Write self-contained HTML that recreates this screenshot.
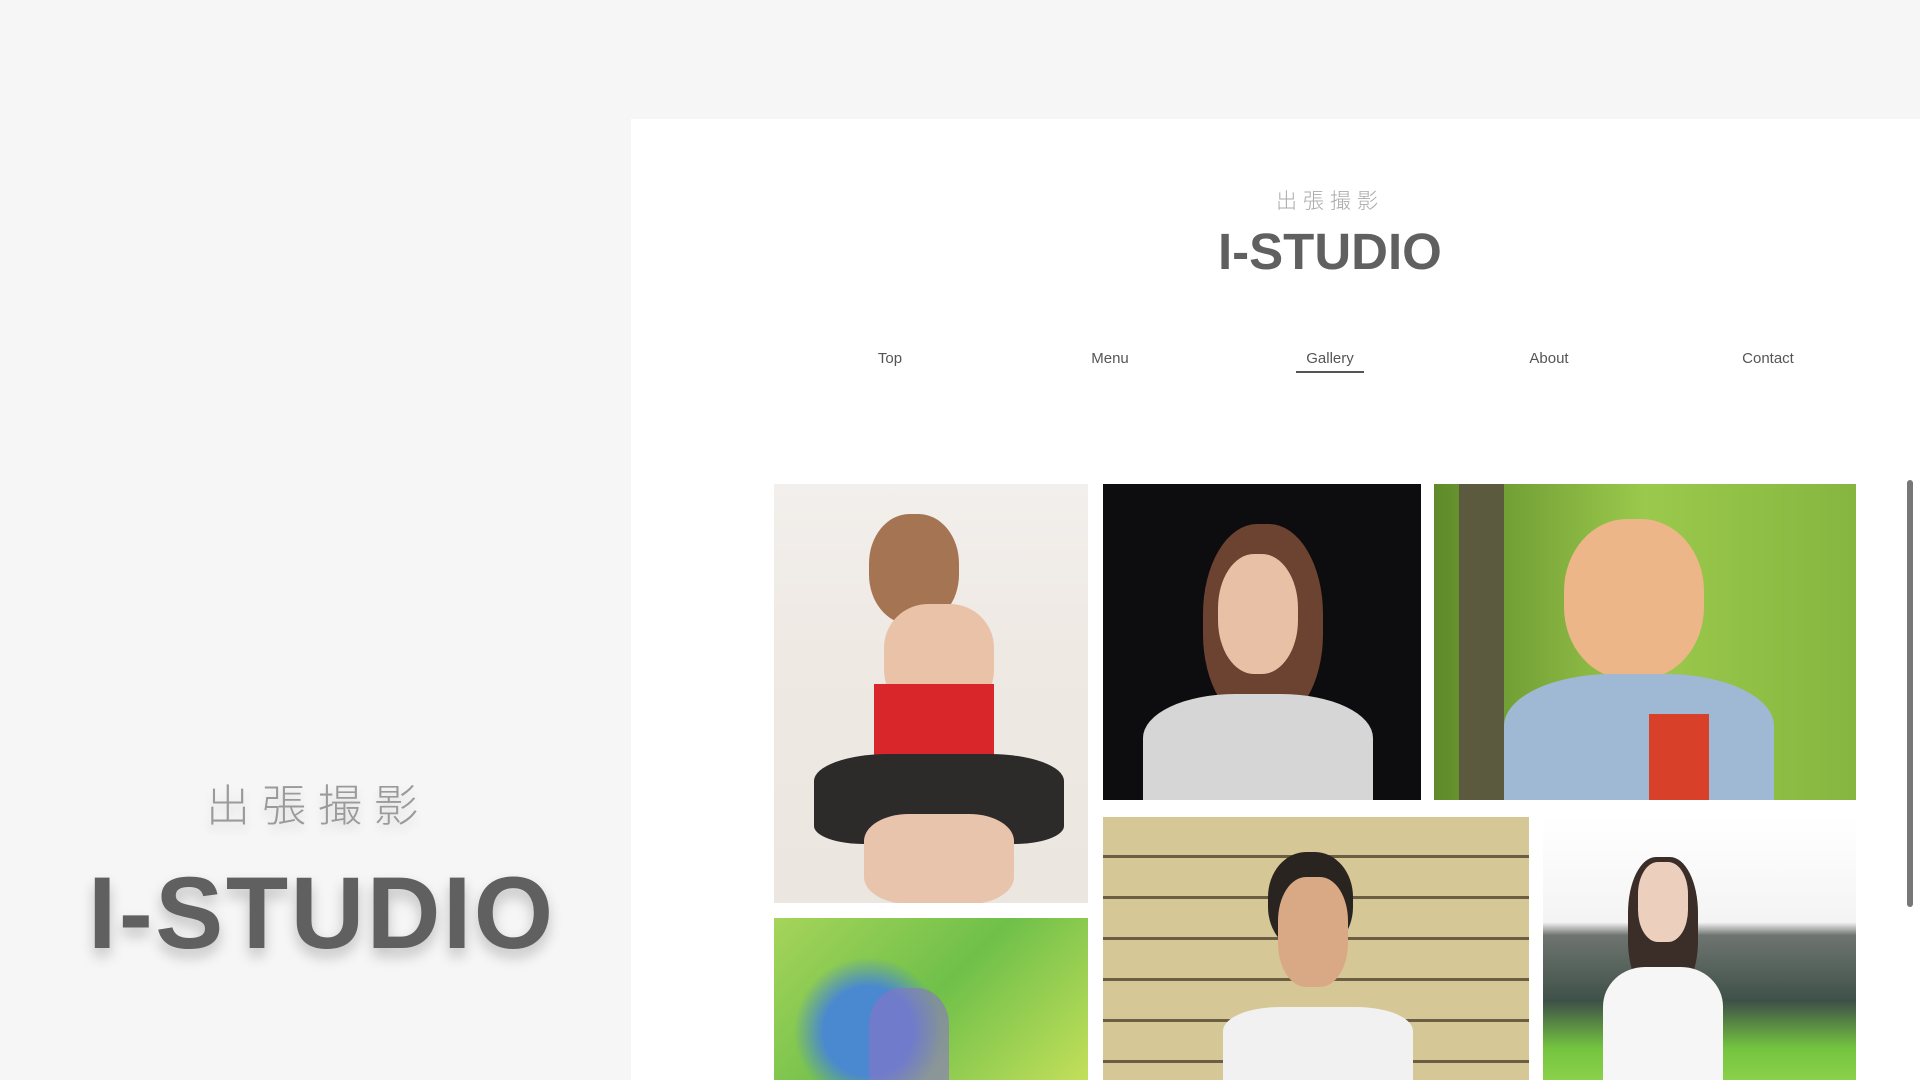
<!DOCTYPE html>
<html><head><meta charset="utf-8"><style>
*{margin:0;padding:0;box-sizing:border-box}
body{width:1920px;height:1080px;overflow:hidden;background:#f6f6f6;font-family:"Liberation Sans","Noto Sans CJK JP",sans-serif;position:relative}
.panel{position:absolute;left:631px;top:119px;width:1289px;height:961px;background:#fff}
.abs{position:absolute}
.jp{color:#9a9a9a;font-weight:300;white-space:nowrap}
.logo{color:#606060;font-weight:bold;white-space:nowrap;line-height:1}
.nav{position:absolute;top:350px;font-size:15px;color:#555;transform:translateX(-50%)}
.ph{position:absolute;overflow:hidden}
</style></head><body>
<div class="abs jp" style="left:206px;top:770px;font-size:44px;letter-spacing:12px;text-shadow:0 6px 10px rgba(0,0,0,.12)">出張撮影</div>
<div class="abs logo" style="left:88px;top:862px;font-size:102px;letter-spacing:2.5px;text-shadow:0 8px 14px rgba(0,0,0,.22)">I-STUDIO</div>
<div class="panel"></div>
<div class="abs jp" style="left:1276px;top:185px;font-size:21px;letter-spacing:6px;color:#aaa">出張撮影</div>
<div class="abs logo" style="left:1218px;top:226px;font-size:51px;letter-spacing:0">I-STUDIO</div>
<div class="nav" style="left:890px">Top</div>
<div class="nav" style="left:1110px">Menu</div>
<div class="nav" style="left:1330px">Gallery</div>
<div class="abs" style="left:1296px;top:371px;width:68px;height:2px;background:#555"></div>
<div class="nav" style="left:1549px">About</div>
<div class="nav" style="left:1768px">Contact</div>

<div class="ph" style="left:774px;top:484px;width:314px;height:419px;background:linear-gradient(180deg,#f2efec 0%,#efe9e4 40%,#ece6e0 100%)">
 <div class="abs" style="left:95px;top:30px;width:90px;height:110px;border-radius:45%;background:#a57553"></div>
 <div class="abs" style="left:110px;top:120px;width:110px;height:110px;background:#e9c2a8;border-radius:40%"></div>
 <div class="abs" style="left:100px;top:200px;width:120px;height:80px;background:#d8262a"></div>
 <div class="abs" style="left:40px;top:270px;width:250px;height:90px;background:#2d2a2a;border-radius:30% 30% 20% 20%"></div>
 <div class="abs" style="left:90px;top:330px;width:150px;height:90px;background:#e8c4ac;border-radius:30%"></div>
</div>
<div class="ph" style="left:1103px;top:484px;width:318px;height:316px;background:#0d0d0f">
 <div class="abs" style="left:100px;top:40px;width:120px;height:200px;border-radius:45%;background:#6b4330"></div>
 <div class="abs" style="left:115px;top:70px;width:80px;height:120px;border-radius:45%;background:#e8c0a6"></div>
 <div class="abs" style="left:40px;top:210px;width:230px;height:110px;border-radius:40% 40% 0 0;background:#d6d6d6"></div>
</div>
<div class="ph" style="left:1434px;top:484px;width:422px;height:316px;background:linear-gradient(90deg,#5e8a2a,#9bc94c 50%,#86b640)">
 <div class="abs" style="left:25px;top:0;width:45px;height:316px;background:#5b5a3e"></div>
 <div class="abs" style="left:130px;top:35px;width:140px;height:160px;border-radius:45%;background:#ecb688"></div>
 <div class="abs" style="left:70px;top:190px;width:270px;height:130px;border-radius:40% 40% 0 0;background:#9fb8d4"></div>
 <div class="abs" style="left:215px;top:230px;width:60px;height:90px;background:#d8402a"></div>
</div>
<div class="ph" style="left:774px;top:918px;width:314px;height:162px;background:radial-gradient(circle at 30% 70%,#4a88d0 0 18%,transparent 30%),linear-gradient(135deg,#a6d45a,#6fc04a 50%,#c3df5a)">
 <div class="abs" style="left:95px;top:70px;width:80px;height:92px;background:#8a73c8;opacity:.6;border-radius:40% 40% 0 0"></div>
</div>
<div class="ph" style="left:1103px;top:817px;width:426px;height:263px;background:repeating-linear-gradient(180deg,#d6c797 0 38px,#6b5e43 38px 41px)">
 <div class="abs" style="left:165px;top:35px;width:85px;height:100px;border-radius:45%;background:#2a2420"></div>
 <div class="abs" style="left:175px;top:60px;width:70px;height:110px;border-radius:40%;background:#d9a985"></div>
 <div class="abs" style="left:120px;top:190px;width:190px;height:80px;border-radius:30% 30% 0 0;background:#f1f1f1"></div>
</div>
<div class="ph" style="left:1543px;top:817px;width:313px;height:263px;background:linear-gradient(180deg,#ffffff 0%,#f4f4f4 40%,#6f7470 45%,#3e5148 70%,#74c43f 88%,#8ad14a 100%)">
 <div class="abs" style="left:85px;top:40px;width:70px;height:140px;border-radius:40%;background:#3b2d28"></div>
 <div class="abs" style="left:95px;top:45px;width:50px;height:80px;border-radius:40%;background:#eccfbd"></div>
 <div class="abs" style="left:60px;top:150px;width:120px;height:113px;border-radius:35% 35% 0 0;background:#f6f6f6"></div>
</div>
<div class="abs" style="left:1907px;top:480px;width:6px;height:427px;border-radius:3px;background:#777"></div>
</body></html>
